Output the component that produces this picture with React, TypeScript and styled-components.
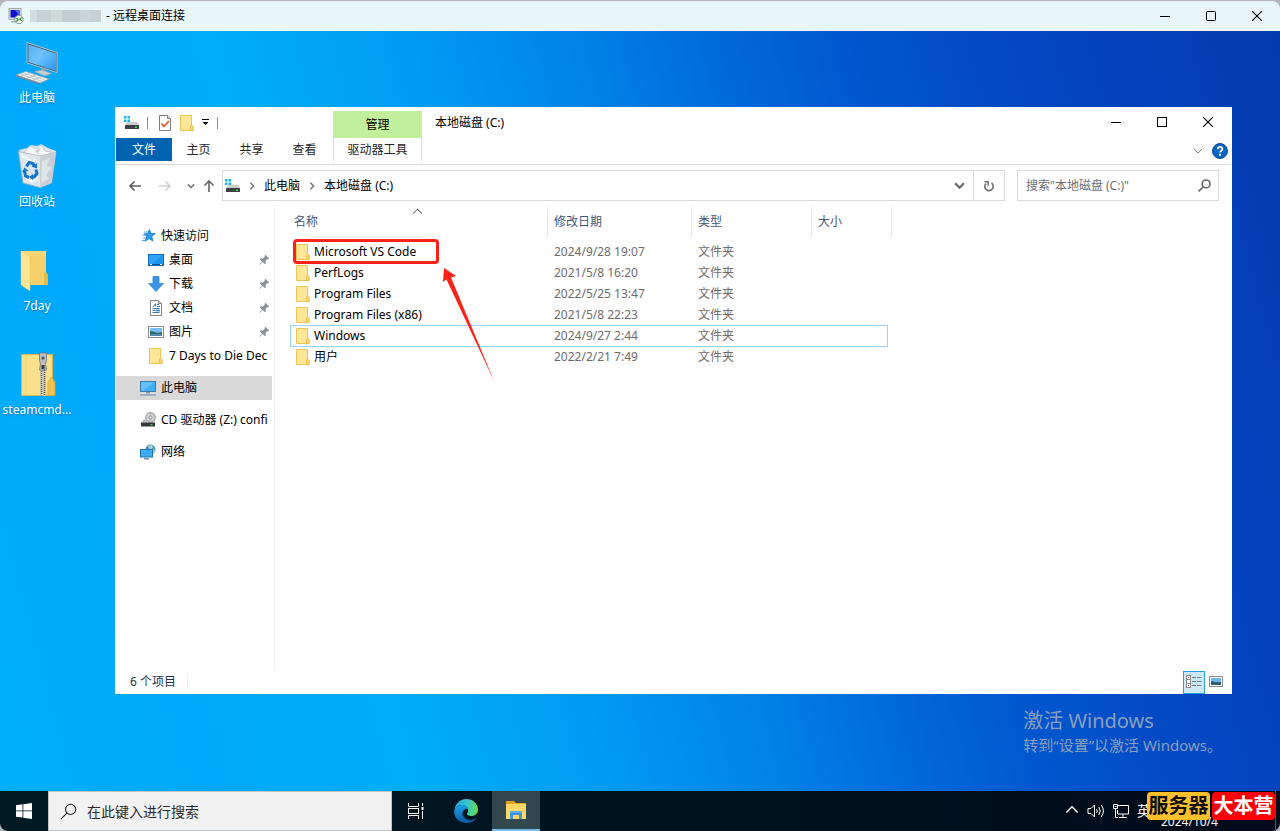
import React from "react";
import styled, { createGlobalStyle, css } from "styled-components";

const GlobalStyle = createGlobalStyle`
  *, *::before, *::after { box-sizing: border-box; }
  html, body { margin: 0; padding: 0; }
  body {
    background: #b4b4bb;
    font-family: "Noto Sans", "Noto Sans CJK SC", sans-serif;
    font-size: 12px;
    line-height: 16px;
    color: #000;
  }
  button, input { font: inherit; color: inherit; margin: 0; padding: 0; border: 0; background: none; }
  svg { display: block; flex: none; }
  ul { list-style: none; margin: 0; padding: 0; }
  a { color: inherit; text-decoration: none; }
`;

/* ---------- Remote session frame ---------- */

const Session = styled.div`
  display: flex;
  flex-direction: column;
  min-height: 100vh;
  padding-top: 1px;
`;

const SessionBar = styled.header`
  display: flex;
  align-items: center;
  height: 30px;
  padding-left: 8px;
  border-radius: 8px 8px 0 0;
  background: #e9f6f7;
`;

const SessionTitle = styled.h1`
  display: flex;
  align-items: center;
  gap: 5px;
  flex: 1;
  margin: 0 0 0 6px;
  font-size: 12px;
  font-weight: 400;
`;

const MaskedHost = styled.span`
  width: 71px;
  height: 12px;
  background: linear-gradient(90deg, #d3dcde 0 10%, #c8d0d2 10% 30%, #d0d9da 30% 45%, #c5cdd0 45% 70%, #cbd4d6 70% 85%, #c8d0d3 85%);
`;

const WindowButtons = styled.div`
  display: flex;
`;

const WindowButton = styled.button`
  display: flex;
  align-items: center;
  justify-content: center;
  width: 46px;
  height: 30px;
`;

const Desktop = styled.main`
  position: relative;
  display: flex;
  flex: 1;
  background: linear-gradient(75deg, #00b0fb 0%, #00a9fb 14%, #00aef9 28%, #009bf3 41%, #0086e8 51%, #006cdc 61%, #0056ce 71%, #0447c2 82%, #033ab0 100%);
`;

const Shortcuts = styled.ul`
  flex: none;
  width: 115px;
  padding-top: 9px;
`;

const Shortcut = styled.li`
  width: 74px;
  height: 104px;
`;

const ShortcutLink = styled.a`
  display: flex;
  flex-direction: column;
  align-items: center;
  gap: 2px;
  color: #fff;
  white-space: nowrap;
  text-shadow: 0 1px 2px rgba(0, 50, 110, 0.5);
`;

/* ---------- Explorer window ---------- */

const Explorer = styled.section`
  display: flex;
  flex: 1;
  flex-direction: column;
  min-width: 0;
  margin: 76px 48px 97px 0;
  padding: 0 1px;
  background: #fff;
`;

const CaptionRow = styled.div`
  display: flex;
  height: 31px;
`;

const QuickTools = styled.div`
  display: flex;
  align-items: center;
  width: 217px;
  padding-left: 8px;
`;

const QuickButton = styled.button<{ $width: number }>`
  display: flex;
  align-items: center;
  justify-content: center;
  width: ${(p) => p.$width}px;
  height: 22px;
`;

const ToolDivider = styled.span<{ $gap: number }>`
  width: 1px;
  height: 12px;
  margin: 0 ${(p) => p.$gap}px;
  background: #8c8c8c;
`;

const ManageTab = styled.div`
  display: flex;
  align-items: center;
  justify-content: center;
  width: 89px;
  margin-top: 4px;
  background: #c2ef9b;
`;

const WindowTitle = styled.h2`
  flex: 1;
  margin: 0;
  padding-left: 13px;
  font-size: 12px;
  font-weight: 400;
  line-height: 31px;
`;

const Ribbon = styled.div`
  display: flex;
  height: 27px;
  border-bottom: 1px solid #dadbdc;
`;

const RibbonTab = styled.button<{ $kind?: "file" | "tools" }>`
  width: 53px;
  height: 23px;
  padding-top: 1px;
  color: #262626;
  ${(p) => p.$kind === "file" && css`
    width: 56px;
    color: #fff;
    background: #0063b1;
  `}
  ${(p) => p.$kind === "tools" && css`
    width: 89px;
    margin-left: 2px;
    border: solid #dcdcdc;
    border-width: 0 1px;
  `}
`;

const RibbonEnd = styled.div`
  display: flex;
  align-items: center;
  gap: 6px;
  margin-left: auto;
  padding-right: 3px;
`;

const PlainButton = styled.button`
  display: flex;
  align-items: center;
  justify-content: center;
  min-width: 16px;
  height: 22px;
`;

const NavigationRow = styled.div`
  display: flex;
  padding: 5px 12px 6px 11px;
`;

const HistoryButtons = styled.div`
  display: flex;
  align-items: center;
  width: 95px;
`;

const HistoryButton = styled.button<{ $width: number }>`
  display: flex;
  align-items: center;
  justify-content: center;
  width: ${(p) => p.$width}px;
  height: 24px;
`;

const AddressBar = styled.div`
  display: flex;
  flex: 1;
  align-items: center;
  height: 31px;
  padding-left: 2px;
  border: 1px solid #d9d9d9;
`;

const Crumb = styled.button`
  padding: 0 1px;
`;

const CrumbArrow = styled.span`
  display: flex;
  justify-content: center;
  width: 22px;
`;

const AddressEnd = styled.div`
  display: flex;
  height: 29px;
  margin-left: auto;
`;

const AddressButton = styled.button<{ $ruled?: boolean }>`
  display: flex;
  align-items: center;
  justify-content: center;
  width: ${(p) => (p.$ruled ? 31 : 28)}px;
  border-left: ${(p) => (p.$ruled ? "1px solid #d9d9d9" : "0")};
`;

const FolderSearch = styled.label`
  display: flex;
  align-items: center;
  width: 202px;
  height: 31px;
  margin-left: 12px;
  padding: 0 7px 0 8px;
  border: 1px solid #d9d9d9;
`;

const FolderSearchInput = styled.input`
  flex: 1;
  min-width: 0;
  outline: 0;
  &::placeholder { color: #6d6d6d; opacity: 1; }
`;

const Body = styled.div`
  display: flex;
  flex: 1;
`;

const NavPane = styled.nav`
  width: 159px;
  padding: 17px 2px 0 0;
  border-right: 1px solid #f0f0f0;
`;

const NavLink = styled.a<{ $level: number; $active?: boolean; $spaced?: boolean }>`
  display: flex;
  align-items: center;
  gap: 5px;
  height: 24px;
  margin-top: ${(p) => (p.$spaced ? 8 : 0)}px;
  padding-left: ${(p) => (p.$level ? 32 : 24)}px;
  background: ${(p) => (p.$active ? "#d9d9d9" : "transparent")};
`;

const NavText = styled.span`
  flex: 1;
  overflow: hidden;
  white-space: nowrap;
`;

const PinSlot = styled.span`
  padding-right: 2px;
`;

const FilePane = styled.div`
  position: relative;
  flex: 1;
  padding-left: 15px;
`;

const FileTable = styled.table`
  width: 602px;
  table-layout: fixed;
  border-collapse: separate;
  border-spacing: 0;
`;

const HeadCell = styled.th<{ $width: number; $first?: boolean }>`
  position: relative;
  width: ${(p) => p.$width}px;
  height: 30px;
  padding: 0 0 0 ${(p) => (p.$first ? 4 : 6)}px;
  border-right: 1px solid #e5e5e5;
  color: #43577a;
  font-weight: 400;
  text-align: left;
`;

const SortMark = styled.span`
  position: absolute;
  top: 0;
  left: 50%;
  margin-left: -7px;
`;

const FileRow = styled.tr<{ $focused?: boolean }>`
  position: relative;
  height: 21px;
  ${(p) => p.$focused && css`
    &::after {
      content: "";
      position: absolute;
      inset: 0 4px -1px 0;
      border: 1px solid #99d1ff;
      pointer-events: none;
    }
  `}
`;

const Spacer = styled.tr`
  height: 4px;
`;

const Cell = styled.td`
  height: 21px;
  padding: 0 0 0 6px;
  color: #6d6d6d;
`;

const NameCell = styled(Cell)`
  padding-left: 5px;
  color: #000;
`;

const FileName = styled.a`
  display: flex;
  align-items: center;
  gap: 3px;
`;

const RedFrame = styled.div`
  position: absolute;
  top: 32px;
  left: 18px;
  width: 146px;
  height: 25px;
  border: 3px solid #fb2219;
  border-radius: 4px;
`;

const RedArrow = styled.div`
  position: absolute;
  top: 61px;
  left: 167px;
`;

const StatusBar = styled.footer`
  display: flex;
  align-items: center;
  height: 24px;
  padding-left: 14px;
  color: #1e3250;
`;

const ItemCount = styled.span`
  padding-right: 11px;
  border-right: 1px solid #f0f0f0;
`;

const ViewButtons = styled.div`
  display: flex;
  margin-left: auto;
  padding-right: 4px;
`;

const ViewButton = styled.button<{ $active?: boolean }>`
  display: flex;
  align-items: center;
  justify-content: center;
  width: 22px;
  height: 23px;
  border: 1px solid ${(p) => (p.$active ? "#26a0da" : "transparent")};
  background: ${(p) => (p.$active ? "#cce8f5" : "transparent")};
`;

/* ---------- Activation notice ---------- */

const Activation = styled.aside`
  position: absolute;
  right: 58px;
  bottom: 35px;
  color: #8b9fbd;
  white-space: nowrap;
`;

const ActivationTitle = styled.p`
  margin: 0;
  font-size: 20px;
  line-height: 26px;
`;

const ActivationText = styled.p`
  margin: 0;
  font-size: 15px;
  line-height: 22px;
`;

/* ---------- Taskbar ---------- */

const Taskbar = styled.footer`
  display: flex;
  height: 40px;
  border-radius: 0 0 8px 8px;
  background: linear-gradient(90deg, #001a24, #00121e 60%, #000a1a);
`;

const TaskButton = styled.button<{ $active?: boolean }>`
  display: flex;
  align-items: center;
  justify-content: center;
  width: 48px;
  margin-right: ${(p) => (p.$active ? 0 : 2)}px;
  border-bottom: ${(p) => (p.$active ? "2px solid #76b9ed" : "0")};
  background: ${(p) => (p.$active ? "#33474f" : "none")};
`;

const StartButton = styled.button`
  display: flex;
  align-items: center;
  justify-content: center;
  width: 48px;
`;

const TaskSearch = styled.label`
  display: flex;
  align-items: center;
  gap: 10px;
  width: 344px;
  padding-left: 11px;
  border: 1px solid #c0c4c6;
  background: #f2f2f2;
`;

const TaskSearchInput = styled.input`
  flex: 1;
  padding-top: 2px;
  font-size: 14px;
  line-height: 20px;
  outline: 0;
  &::placeholder { color: #2b2b2b; opacity: 1; }
`;

const Tray = styled.div`
  position: relative;
  display: flex;
  align-items: center;
  gap: 8px;
  width: 215px;
  margin-left: auto;
  color: #fff;
`;

const TrayButton = styled.button`
  display: flex;
  align-items: center;
`;

const InputMode = styled.button`
  font-size: 14px;
  line-height: 20px;
`;

const Clock = styled.time`
  position: absolute;
  left: 96px;
  bottom: 1px;
  font-size: 12px;
`;

const PeekEdge = styled.span`
  align-self: stretch;
  width: 1px;
  margin: 0 4px 0 auto;
  background: #4b545e;
`;

const Badges = styled.div`
  position: absolute;
  top: 1px;
  left: 82px;
  display: flex;
  gap: 2px;
`;

const Badge = styled.span<{ $red?: boolean }>`
  width: 63px;
  height: 28px;
  border-radius: 4px;
  background: ${(p) => (p.$red ? "#fb0007" : "#fdc02d")};
  color: ${(p) => (p.$red ? "#fff" : "#111")};
  font-size: 20px;
  font-weight: 700;
  line-height: 28px;
  text-align: center;
  white-space: nowrap;
`;

/* ---------- Icons ---------- */

const SessionIcon = () => (
  <svg width="16" height="16" viewBox="0 0 16 16">
    <rect x="1" y="0.5" width="12" height="11" fill="#d8dadd" stroke="#a4a8ac" />
    <rect x="2.5" y="2" width="9" height="7.500" fill="#1214c8" />
    <path d="M7 2h4.500v6z" fill="#4c6af0" />
    <path d="M3 13h6v1.500H3z" fill="#a5a9ad" />
    <circle cx="11" cy="11.500" r="4.200" fill="#f4f7f4" stroke="#8b958f" />
    <path d="M8.300 10l1.800 1.500L8.500 13.500M13.500 9.500l-1.700 1.700 1.900 1.600" fill="none" stroke="#2f9a2c" strokeWidth="1.300" />
  </svg>
);

const MinimizeGlyph = () => (
  <svg width="10" height="10" viewBox="0 0 10 10"><path d="M0 5.500h10" stroke="#000" /></svg>
);
const MaximizeGlyph = ({ rounded }: { rounded?: boolean }) => (
  <svg width="10" height="10" viewBox="0 0 10 10">
    <rect x="0.5" y="0.5" width="9" height="9" rx={rounded ? 1 : 0} fill="none" stroke="#000" />
  </svg>
);
const CloseGlyph = () => (
  <svg width="10" height="10" viewBox="0 0 10 10"><path d="M0 0l10 10M10 0L0 10" stroke="#000" strokeWidth="1.100" /></svg>
);

const ComputerIcon = () => (
  <svg width="48" height="48" viewBox="0 0 48 48">
    <defs>
      <linearGradient id="screen" x1="0" y1="0" x2="1" y2="1">
        <stop offset="0" stopColor="#3c9eea" /><stop offset="0.5" stopColor="#64bdfb" /><stop offset="1" stopColor="#2a97ee" />
      </linearGradient>
    </defs>
    <path d="M14 2.500l30 10v20L14 23z" fill="#3d5a70" stroke="#b4c6d2" />
    <path d="M15.500 4.500l27.500 9v17.500l-27.500-9z" fill="url(#screen)" />
    <path d="M15.500 4.500l17 5.500-9 14.500-8-2.500z" fill="#8fd0fb" opacity="0.350" />
    <path d="M28 28l5 1.500v3l-5-1z" fill="#8f9ba3" />
    <path d="M21 31.500l8-1.500 10 3.500-7 2.500z" fill="#c4ccd1" stroke="#8d989f" strokeWidth="0.500" />
    <path d="M3 35l10-3.500L36 39l-9 4z" fill="#eef0f1" stroke="#9aa4aa" strokeWidth="0.700" />
    <path d="M8 34.500l22 7M12 33.500l20 6.500M7 36.500l10-3.500M13 38.500l10-3.500M19 40.500l10-4" stroke="#aeb7bc" strokeWidth="0.700" />
    <path d="M3 35l24 8v1.500L3 36.500z" fill="#7e8990" />
  </svg>
);

const RecycleIcon = () => (
  <svg width="48" height="48" viewBox="0 2 48 48">
    <path d="M6 8l8-2 4-3 6 1 4-2 7 4 8 3-1 5H7z" fill="#dfe3e6" />
    <path d="M12 9l5-5 6 3 5-4 4 6 6 1-4 5H12z" fill="#f7f8f8" stroke="#b0b8bd" strokeWidth="0.600" />
    <path d="M17 4l5 5 6-4-3 7z" fill="#c9cfd3" />
    <path d="M5.500 9.500L27 14l16-3.500L38.500 41 27 45.500 10 41z" fill="#e5e9ec" fillOpacity="0.950" stroke="#a7b1b8" strokeWidth="0.800" />
    <path d="M27 14l16-3.500L38.500 41 27 45.500z" fill="#c9d0d5" />
    <path d="M29 19l8-3-3 8 5 1-6 8 3 4-8 4z" fill="#dfe4e7" />
    <path d="M9 14l8 4-4 3M22 17l-2 5 5 5M13 36l6 4 6-4" fill="none" stroke="#f8f9fa" strokeWidth="2" />
    <g fill="none" stroke="#1875cb" strokeWidth="3">
      <path d="M13.500 24.500l2.500-4 4 1 1.500 3" />
      <path d="M23 27.500l1 4-3 3.500-2.500 0" />
      <path d="M16 35.500l-3.500-1.500-1-5" />
    </g>
    <path d="M18.500 24.500l5.500 2V21zM20 32l-4 3 4 3zM9 30l2.500-4.500 4 3.500z" fill="#1875cb" />
  </svg>
);

const OpenFolderIcon = () => (
  <svg width="48" height="48" viewBox="0 0 48 48">
    <path d="M8 3h25v22l2 2v10H8z" fill="#f6d675" />
    <path d="M17 8h16v29H17z" fill="#f3d069" />
    <path d="M33 24l2 3v10h-4V26z" fill="#e5bb4c" />
    <path d="M8 3l9 6v34l-9-6z" fill="#ffe694" stroke="#edca66" strokeWidth="0.500" />
  </svg>
);

const ZipIcon = () => (
  <svg width="48" height="48" viewBox="0 3 48 48">
    <path d="M8.500 5.500h31v41h-31z" fill="#fae08a" stroke="#ddb54b" />
    <path d="M13 6v40" stroke="#f1d278" />
    <path d="M35 46.500V33l3.500-5 3.500 5v13.500z" fill="#edc353" stroke="#d3a437" strokeWidth="0.800" />
    <path d="M27 20h6v26.500h-6z" fill="#ded7bd" />
    <path d="M28.500 20v26.500M31.500 19v27.500" stroke="#46484a" strokeWidth="1.600" strokeDasharray="1 1" />
    <path d="M26.500 4h7v7l-1 4 1 6h-7l1-6-1-4z" fill="#bcc1c5" stroke="#6d7276" strokeWidth="0.800" />
    <circle cx="30" cy="9" r="1.700" fill="#5d6266" />
    <path d="M28.500 16h3v4h-3z" fill="#35383b" />
  </svg>
);

const FolderIcon = () => (
  <svg width="16" height="16" viewBox="0 0 16 16">
    <path d="M1.500.5h11v10l1.500 1v4H1.500z" fill="#ffe79a" stroke="#ebc553" />
    <path d="M11.500 15.500v-4l1-1.500 1.500 1.500v4z" fill="#fadb74" stroke="#e3b844" strokeWidth="0.800" />
  </svg>
);

const DriveIcon = () => (
  <svg width="16" height="16" viewBox="0 0 16 16">
    <path d="M0 1h2.500v2.500H0zM3.500 1H6v2.500H3.500zM0 4.500h2.500V7H0zM3.500 4.500H6V7H3.500z" fill="#17b4ec" />
    <path d="M3 7h10.500l1.500 3H1.500z" fill="#c8cbcd" />
    <rect x="1" y="10" width="14" height="4" rx="0.5" fill="#3c4043" />
    <rect x="11" y="11.500" width="2" height="1.500" fill="#35dc42" />
  </svg>
);

const PropertiesIcon = () => (
  <svg width="14" height="16" viewBox="0 0 14 16">
    <path d="M1.500.5h8l3 3v12h-11z" fill="#fff" stroke="#7d7d7d" />
    <path d="M9.500.5v3h3" fill="#ddd" stroke="#7d7d7d" />
    <path d="M3.500 8.500l2.500 3 5-5.500" fill="none" stroke="#e45a2b" strokeWidth="1.800" />
  </svg>
);

const MenuMark = () => (
  <svg width="8" height="7" viewBox="0 0 8 7"><path d="M0 .5h7" stroke="#000" /><path d="M.5 3h6L3.500 6z" fill="#000" /></svg>
);

const Chevron = ({ dir, color = "#7a7a7a", size = 8, weight = 1 }: { dir: "up" | "down" | "right"; color?: string; size?: number; weight?: number }) => {
  const d = { up: "M1 6l4-4 4 4", down: "M1 3l4 4 4-4", right: "M3 1l4 4-4 4" }[dir];
  return (
    <svg width={size} height={size} viewBox="0 0 10 10">
      <path d={d} fill="none" stroke={color} strokeWidth={weight} />
    </svg>
  );
};

const Arrow = ({ dir, color }: { dir: "left" | "right" | "up"; color: string }) => {
  const d = { left: "M13 7H2M6.500 2.500L2 7l4.500 4.500", right: "M1 7h11M7.500 2.500L12 7l-4.500 4.500", up: "M7 13V2M2.500 6.500L7 2l4.500 4.500" }[dir];
  return (
    <svg width="14" height="14" viewBox="0 0 14 14"><path d={d} fill="none" stroke={color} strokeWidth="1.700" /></svg>
  );
};

const RefreshIcon = () => (
  <svg width="12" height="12" viewBox="0 0 12 12">
    <path d="M8.500 3A4.200 4.200 0 1 1 3 3.500" fill="none" stroke="#6e6e6e" strokeWidth="1.600" />
    <path d="M1.500 1.800h3.700v3.700" fill="none" stroke="#6e6e6e" strokeWidth="1.500" />
  </svg>
);

const Magnifier = ({ size, color, weight }: { size: number; color: string; weight: number }) => (
  <svg width={size} height={size} viewBox="0 0 16 16">
    <circle cx="10" cy="6" r="4.800" fill="none" stroke={color} strokeWidth={weight} />
    <path d="M6.500 9.500L.8 15.200" stroke={color} strokeWidth={weight} />
  </svg>
);

const HelpIcon = () => (
  <svg width="16" height="16" viewBox="0 0 16 16">
    <circle cx="8" cy="8" r="7.500" fill="#0a66c2" stroke="#0d4d8f" />
    <path d="M5.800 6.200c0-3 4.600-2.900 4.600-.2 0 1.800-2.300 1.700-2.300 3.600" fill="none" stroke="#fff" strokeWidth="1.700" />
    <circle cx="8" cy="11.800" r="1.100" fill="#fff" />
  </svg>
);

const StarIcon = () => (
  <svg width="16" height="16" viewBox="0 0 16 16">
    <path d="M9.500 1.500l1.300 4 4.200.2-3.300 2.700 1.200 4.600-3.900-2.500L5.500 13l1-4.500L4 6l3.800-.4z" fill="#2f98e8" stroke="#1d82d4" strokeWidth="1" />
    <path d="M4 4h4M2 7h4M3 10h3M2 12.500h3" stroke="#54aef0" />
  </svg>
);

const DesktopIcon = () => (
  <svg width="16" height="16" viewBox="0 0 16 16">
    <rect x="0.5" y="2.500" width="15" height="11" fill="#1a95f2" stroke="#1071c4" />
    <path d="M1 3h14L4 12H1z" fill="#45adf8" opacity="0.500" />
    <path d="M1 12.500h14" stroke="#0b4f93" /><path d="M2 12.500h2M12 12.500h2" stroke="#fff" />
  </svg>
);

const DownloadIcon = () => (
  <svg width="16" height="16" viewBox="0 0 16 16">
    <path d="M5 .5h6v7h4.500L8 15.500.5 7.500H5z" fill="#3996e6" stroke="#2a7fcb" strokeWidth="0.700" />
  </svg>
);

const DocumentIcon = () => (
  <svg width="16" height="16" viewBox="0 0 16 16">
    <path d="M2.500.5h8l3 3v12h-11z" fill="#fff" stroke="#838383" />
    <path d="M10.500.5v3h3" fill="#ddd" stroke="#838383" />
    <path d="M4.500 6.500h1l2-3v3" fill="none" stroke="#2688c9" />
    <path d="M9 4.500h2M9 6.500h3M4.500 8.500h7M4.500 10.500h3M4.500 12.500h7" stroke="#3b7bac" />
    <path d="M8 9.500h4v2H8z" fill="#4794c4" />
  </svg>
);

const PictureIcon = () => (
  <svg width="16" height="16" viewBox="0 0 16 16">
    <rect x="0.5" y="2.500" width="15" height="11" fill="#fff" stroke="#8c8c8c" />
    <path d="M2 4h12v5H2z" fill="#79bdf0" />
    <path d="M2 7c3 0 4 1 6 1.500s4 0 6-.5v3H2z" fill="#2d6b5d" />
    <path d="M2 10h12v2H2z" fill="#5089ae" />
  </svg>
);

const ThisPcIcon = () => (
  <svg width="16" height="16" viewBox="0 0 16 16">
    <rect x="0.5" y="1.500" width="15" height="10" fill="#43b0f6" stroke="#3a7ca9" />
    <path d="M1 2h13L3 11H1z" fill="#7fcbfa" opacity="0.600" />
    <path d="M6 12h4v1.500H6z" fill="#7f9bb0" /><path d="M0 15h16" stroke="#7893ad" strokeWidth="1.200" />
  </svg>
);

const DiscDriveIcon = () => (
  <svg width="16" height="16" viewBox="0 0 16 16">
    <circle cx="10.500" cy="5.500" r="4.800" fill="#d3d6d8" stroke="#85898c" />
    <circle cx="10.500" cy="5.500" r="1.600" fill="#fff" stroke="#85898c" />
    <path d="M3.500 7.500l-2 3h13.500l-1-2h-4z" fill="#b7babd" />
    <rect x="1" y="10.500" width="14" height="4" fill="#35393b" />
    <rect x="10.500" y="12" width="2" height="1.200" fill="#35dc42" />
  </svg>
);

const NetworkIcon = () => (
  <svg width="16" height="16" viewBox="0 0 16 16">
    <circle cx="10.500" cy="5.500" r="5" fill="#4792bd" />
    <path d="M8 2l4-1 1 3-3 2zM11 7l4-2-1 4z" fill="#a7d9d2" />
    <rect x="0.5" y="5.500" width="12" height="7.500" fill="#3dacf4" stroke="#2374ae" />
    <path d="M4 14h5v1.500H4z" fill="#7893ad" />
  </svg>
);

const PinIcon = () => (
  <svg width="12" height="12" viewBox="0 0 12 12">
    <path d="M7.500.8l3.700 3.700-1 .8-.8-.2-1.800 1.800.2 2.300-1 1L4.600 8 1 11.300.7 11 4 7.400 1.800 5.200l1-1 2.300.2 1.800-1.800-.2-.9z" fill="#86929c" />
  </svg>
);

const DetailsViewIcon = () => (
  <svg width="16" height="14" viewBox="0 0 16 14">
    <rect x="0.5" y="0.5" width="4" height="12" fill="#fff" stroke="#8b8b8b" />
    <path d="M.5 4.500h4M.5 8.500h4" stroke="#8b8b8b" />
    <path d="M2 2.500h1M2 10.500h1" stroke="#c2343a" />
    <path d="M6 2.500h4M11 2.500h4.500M6 6.500h4M11 6.500h4.500M6 10.500h4M11 10.500h4.500" stroke="#7c7c7c" />
  </svg>
);

const ThumbViewIcon = () => (
  <svg width="14" height="12" viewBox="0 0 14 12">
    <rect x="0.5" y="0.5" width="13" height="10" fill="#fff" stroke="#8c8c8c" />
    <path d="M2 2h10v4H2z" fill="#6db5ef" /><path d="M2 5l4 1 6 0v3H2z" fill="#2d5f6d" />
  </svg>
);

const WindowsLogo = () => (
  <svg width="16" height="16" viewBox="0 0 16 16">
    <path d="M0 2.200l6.500-.9v6.200H0zM7.300 1.200L16 0v7.500H7.300zM0 8.300h6.500v6.300L0 13.700zM7.300 8.300H16V16l-8.700-1.200z" fill="#fff" />
  </svg>
);

const TaskViewIcon = () => (
  <svg width="16" height="16" viewBox="0 0 16 16">
    <path d="M.5 0v3.500h10V0M.5 16v-3.500h10V16" fill="none" stroke="#fff" />
    <rect x="0.5" y="5.500" width="10" height="5" fill="none" stroke="#fff" />
    <path d="M14.500 0v3M14.500 8v8" stroke="#fff" /><path d="M13.500 4h2v3h-2z" fill="#fff" />
  </svg>
);

const EdgeIcon = () => (
  <svg width="24" height="24" viewBox="0 0 24 24">
    <defs>
      <linearGradient id="edgeTop" x1="0" y1="0.3" x2="1" y2="0.5">
        <stop offset="0" stopColor="#2aa9e6" /><stop offset="0.5" stopColor="#33c4cf" /><stop offset="1" stopColor="#63da55" />
      </linearGradient>
      <linearGradient id="edgeSide" x1="0" y1="0" x2="0" y2="1">
        <stop offset="0" stopColor="#1da1e8" /><stop offset="1" stopColor="#0c59a4" />
      </linearGradient>
    </defs>
    <path d="M.5 11C1.500 4 6.500 0 12.200 0 19 0 24 5 24 10.500c0 4-3 6.500-6.500 6.500-3 0-4.500-1.200-4.500-2.200 0-.8 1.200-1.300 1.200-3.600C14.200 8.500 11.500 6 8 6 4.500 6 1.500 8 .5 11z" fill="url(#edgeTop)" />
    <path d="M.2 12.500C.5 9 4 6 8 6c3.500 0 6 2.300 6.200 4.500C13.500 9.800 12.500 9.500 11.500 10 8.500 11.500 8 15.500 10.500 18.500c2.500 2.800 7.500 3.400 11.700.7C20 22.500 16.500 24 12.500 24 5.500 24 0 19 .2 12.500z" fill="url(#edgeSide)" />
    <path d="M7.800 13c-.3 5 3.500 9 8.700 9 2.300-.6 4.500-1.700 5.700-2.800-4.200 2.700-9.200 2.100-11.700-.7-1.600-2-2-4-1.700-5.800z" fill="#0d4a8c" />
  </svg>
);

const ExplorerIcon = () => (
  <svg width="22" height="20" viewBox="0 0 22 20">
    <path d="M1 1h8l2 2h10v5H1z" fill="#e3a31c" />
    <path d="M1 4h20v15H1z" fill="#ffd868" />
    <path d="M5 19v-8h12v8h-3v-4H8v4z" fill="#3d94dc" />
    <path d="M5 11h12v2H5z" fill="#5aabea" />
  </svg>
);

const SpeakerIcon = () => (
  <svg width="18" height="16" viewBox="0 0 18 16">
    <path d="M1 5.500h3l3.500-3.500v12L4 10.500H1z" fill="none" stroke="#fff" />
    <path d="M9.500 6q1.500 2 0 4M11.800 4q3 4 0 8M14.200 2q4.500 6 0 12" fill="none" stroke="#fff" />
  </svg>
);

const WiredIcon = () => (
  <svg width="16" height="14" viewBox="0 0 16 14">
    <path d="M5 1.500h10.500v8.500H4.500V6M10 10v3M6 13.500h8M2.500 5v8.500H5M.5.500h4v4h-4zM1.500 2.500h2" fill="none" stroke="#fff" />
  </svg>
);

const PointerArrow = () => (
  <svg width="54" height="116" viewBox="0 0 54 116">
    <path d="M2 0l12 8-5 1.500L52.500 114 4.500 11.500 1 14z" fill="#fb2219" />
  </svg>
);

/* ---------- Data ---------- */

const shortcuts = [
  { label: "此电脑", icon: <ComputerIcon /> },
  { label: "回收站", icon: <RecycleIcon /> },
  { label: "7day", icon: <OpenFolderIcon /> },
  { label: "steamcmd...", icon: <ZipIcon /> },
];

const places = [
  { label: "快速访问", icon: <StarIcon />, level: 0 },
  { label: "桌面", icon: <DesktopIcon />, level: 1, pinned: true },
  { label: "下载", icon: <DownloadIcon />, level: 1, pinned: true },
  { label: "文档", icon: <DocumentIcon />, level: 1, pinned: true },
  { label: "图片", icon: <PictureIcon />, level: 1, pinned: true },
  { label: "7 Days to Die Dec", icon: <FolderIcon />, level: 1 },
  { label: "此电脑", icon: <ThisPcIcon />, level: 0, active: true, spaced: true },
  { label: "CD 驱动器 (Z:) confi", icon: <DiscDriveIcon />, level: 0, spaced: true },
  { label: "网络", icon: <NetworkIcon />, level: 0, spaced: true },
];

const files = [
  { name: "Microsoft VS Code", date: "2024/9/28 19:07" },
  { name: "PerfLogs", date: "2021/5/8 16:20" },
  { name: "Program Files", date: "2022/5/25 13:47" },
  { name: "Program Files (x86)", date: "2021/5/8 22:23" },
  { name: "Windows", date: "2024/9/27 2:44", focused: true },
  { name: "用户", date: "2022/2/21 7:49" },
];

const Controls = ({ rounded }: { rounded?: boolean }) => (
  <WindowButtons>
    <WindowButton aria-label="最小化"><MinimizeGlyph /></WindowButton>
    <WindowButton aria-label="最大化"><MaximizeGlyph rounded={rounded} /></WindowButton>
    <WindowButton aria-label="关闭"><CloseGlyph /></WindowButton>
  </WindowButtons>
);

export default function App() {
  return (
    <Session>
      <GlobalStyle />
      <SessionBar>
        <SessionIcon />
        <SessionTitle><MaskedHost />- 远程桌面连接</SessionTitle>
        <Controls rounded />
      </SessionBar>

      <Desktop>
        <Shortcuts>
          {shortcuts.map((s) => (
            <Shortcut key={s.label}>
              <ShortcutLink href="#">
                {s.icon}
                <span>{s.label}</span>
              </ShortcutLink>
            </Shortcut>
          ))}
        </Shortcuts>

        <Explorer>
          <CaptionRow>
            <QuickTools>
              <DriveIcon />
              <ToolDivider $gap={7} />
              <QuickButton $width={20} aria-label="属性"><PropertiesIcon /></QuickButton>
              <QuickButton $width={24} aria-label="新建文件夹"><FolderIcon /></QuickButton>
              <QuickButton $width={14} aria-label="自定义快速访问工具栏"><MenuMark /></QuickButton>
              <ToolDivider $gap={4} />
            </QuickTools>
            <ManageTab>管理</ManageTab>
            <WindowTitle>本地磁盘 (C:)</WindowTitle>
            <Controls />
          </CaptionRow>

          <Ribbon>
            <RibbonTab $kind="file">文件</RibbonTab>
            <RibbonTab>主页</RibbonTab>
            <RibbonTab>共享</RibbonTab>
            <RibbonTab>查看</RibbonTab>
            <RibbonTab $kind="tools">驱动器工具</RibbonTab>
            <RibbonEnd>
              <PlainButton aria-label="展开功能区"><Chevron dir="down" size={10} /></PlainButton>
              <PlainButton aria-label="帮助"><HelpIcon /></PlainButton>
            </RibbonEnd>
          </Ribbon>

          <NavigationRow>
            <HistoryButtons>
              <HistoryButton $width={16} aria-label="后退"><Arrow dir="left" color="#5f5f5f" /></HistoryButton>
              <HistoryButton $width={44} aria-label="前进"><Arrow dir="right" color="#d0d0d0" /></HistoryButton>
              <HistoryButton $width={8} aria-label="最近位置"><Chevron dir="down" weight={2} /></HistoryButton>
              <HistoryButton $width={27} aria-label="上移"><Arrow dir="up" color="#6b6b6b" /></HistoryButton>
            </HistoryButtons>
            <AddressBar>
              <DriveIcon />
              <CrumbArrow><Chevron dir="right" weight={2} /></CrumbArrow>
              <Crumb>此电脑</Crumb>
              <CrumbArrow><Chevron dir="right" weight={2} /></CrumbArrow>
              <Crumb>本地磁盘 (C:)</Crumb>
              <AddressEnd>
                <AddressButton aria-label="以前的位置"><Chevron dir="down" size={11} weight={2} color="#666" /></AddressButton>
                <AddressButton $ruled aria-label="刷新"><RefreshIcon /></AddressButton>
              </AddressEnd>
            </AddressBar>
            <FolderSearch>
              <FolderSearchInput aria-label="搜索" placeholder={'搜索"本地磁盘 (C:)"'} />
              <Magnifier size={13} color="#666" weight={2} />
            </FolderSearch>
          </NavigationRow>

          <Body>
            <NavPane>
              {places.map((p, i) => (
                <NavLink key={i} href="#" $level={p.level} $active={p.active} $spaced={p.spaced}>
                  {p.icon}
                  <NavText>{p.label}</NavText>
                  {p.pinned && <PinSlot><PinIcon /></PinSlot>}
                </NavLink>
              ))}
            </NavPane>
            <FilePane>
              <FileTable>
                <thead>
                  <tr>
                    <HeadCell $width={258} $first>名称<SortMark><Chevron dir="up" size={11} /></SortMark></HeadCell>
                    <HeadCell $width={144}>修改日期</HeadCell>
                    <HeadCell $width={120}>类型</HeadCell>
                    <HeadCell $width={80}>大小</HeadCell>
                  </tr>
                </thead>
                <tbody>
                  <Spacer aria-hidden="true" />
                  {files.map((f) => (
                    <FileRow key={f.name} $focused={f.focused}>
                      <NameCell><FileName href="#"><FolderIcon />{f.name}</FileName></NameCell>
                      <Cell>{f.date}</Cell>
                      <Cell>文件夹</Cell>
                      <Cell />
                    </FileRow>
                  ))}
                </tbody>
              </FileTable>
              <RedFrame />
              <RedArrow><PointerArrow /></RedArrow>
            </FilePane>
          </Body>

          <StatusBar>
            <ItemCount>6 个项目</ItemCount>
            <ViewButtons>
              <ViewButton $active aria-label="详细信息"><DetailsViewIcon /></ViewButton>
              <ViewButton aria-label="大缩略图"><ThumbViewIcon /></ViewButton>
            </ViewButtons>
          </StatusBar>
        </Explorer>

        <Activation>
          <ActivationTitle>激活 Windows</ActivationTitle>
          <ActivationText>转到“设置”以激活 Windows。</ActivationText>
        </Activation>
      </Desktop>

      <Taskbar>
        <StartButton aria-label="开始"><WindowsLogo /></StartButton>
        <TaskSearch>
          <Magnifier size={17} color="#222" weight={1} />
          <TaskSearchInput aria-label="搜索" placeholder="在此键入进行搜索" />
        </TaskSearch>
        <TaskButton aria-label="任务视图"><TaskViewIcon /></TaskButton>
        <TaskButton aria-label="浏览器"><EdgeIcon /></TaskButton>
        <TaskButton $active aria-label="文件资源管理器"><ExplorerIcon /></TaskButton>
        <Tray>
          <TrayButton aria-label="显示隐藏的图标"><Chevron dir="up" size={14} color="#fff" /></TrayButton>
          <TrayButton aria-label="音量"><SpeakerIcon /></TrayButton>
          <TrayButton aria-label="网络"><WiredIcon /></TrayButton>
          <InputMode>英</InputMode>
          <Clock>2024/10/4</Clock>
          <Badges><Badge>服务器</Badge><Badge $red>大本营</Badge></Badges>
          <PeekEdge />
        </Tray>
      </Taskbar>
    </Session>
  );
}
